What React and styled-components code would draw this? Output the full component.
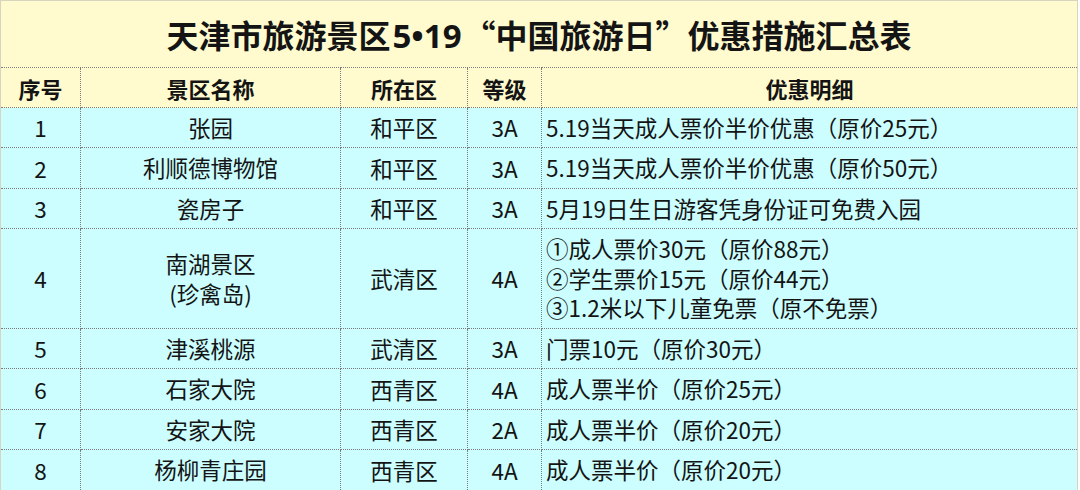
import styled, { createGlobalStyle } from "styled-components";

const GlobalStyle = createGlobalStyle`
  html, body {
    margin: 0;
    padding: 0;
    background: #ffffff;
  }
  body {
    font-family: "Noto Sans CJK SC", "Noto Sans", sans-serif;
    color: #141414;
  }
`;

const rows = [
  { no: "1", name: ["张园"], area: "和平区", level: "3A", detail: ["5.19当天成人票价半价优惠（原价25元）"], h: 40 },
  { no: "2", name: ["利顺德博物馆"], area: "和平区", level: "3A", detail: ["5.19当天成人票价半价优惠（原价50元）"], h: 41 },
  { no: "3", name: ["瓷房子"], area: "和平区", level: "3A", detail: ["5月19日生日游客凭身份证可免费入园"], h: 40 },
  {
    no: "4",
    name: ["南湖景区", "(珍禽岛)"],
    area: "武清区",
    level: "4A",
    detail: ["①成人票价30元（原价88元）", "②学生票价15元（原价44元）", "③1.2米以下儿童免票（原不免票）"],
    h: 100
  },
  { no: "5", name: ["津溪桃源"], area: "武清区", level: "3A", detail: ["门票10元（原价30元）"], h: 40 },
  { no: "6", name: ["石家大院"], area: "西青区", level: "4A", detail: ["成人票半价（原价25元）"], h: 41 },
  { no: "7", name: ["安家大院"], area: "西青区", level: "2A", detail: ["成人票半价（原价20元）"], h: 40 },
  { no: "8", name: ["杨柳青庄园"], area: "西青区", level: "4A", detail: ["成人票半价（原价20元）"], h: 41 }
];

const App = () => {
  return (
    <>
      <GlobalStyle />
      <Sheet>
        <colgroup>
          <col style={{ width: 80 }} />
          <col style={{ width: 260 }} />
          <col style={{ width: 127 }} />
          <col style={{ width: 74 }} />
          <col />
        </colgroup>
        <tbody>
          <tr>
            <TitleCell colSpan={5}>
              天津市旅游景区<Latin>5•19</Latin>“中国旅游日”优惠措施汇总表
            </TitleCell>
          </tr>
          <HeadRow>
            <HeadCell>序号</HeadCell>
            <HeadCell>景区名称</HeadCell>
            <HeadCell>所在区</HeadCell>
            <HeadCell>等级</HeadCell>
            <HeadCell>优惠明细</HeadCell>
          </HeadRow>
          {rows.map((r) => (
            <DataRow key={r.no} style={{ height: r.h }}>
              <Cell>{r.no}</Cell>
              <Cell>
                {r.name.map((n) => (
                  <Line key={n}>{n}</Line>
                ))}
              </Cell>
              <Cell>{r.area}</Cell>
              <Cell>{r.level}</Cell>
              <Cell $left>
                {r.detail.map((d) => (
                  <Line key={d}>{d}</Line>
                ))}
              </Cell>
            </DataRow>
          ))}
        </tbody>
      </Sheet>
    </>
  );
};

export default App;

const Sheet = styled.table`
  width: 1078px;
  border-collapse: collapse;
  table-layout: fixed;
  border: 1px solid #d6d6c0;
`;

const TitleCell = styled.td`
  height: 66px;
  padding: 0;
  background: #fffbcf;
  text-align: center;
  vertical-align: middle;
  font-size: 32px;
  font-weight: 700;
  border-bottom: 1px dotted #7c7c7c;
`;

const Latin = styled.span`
  font-family: "Noto Sans", "DejaVu Sans", sans-serif;
  font-size: 33px;
  margin: 0 2px;
`;

const HeadRow = styled.tr`
  height: 40px;
  background: #fffbcf;
`;

const HeadCell = styled.td`
  padding: 0;
  text-align: center;
  vertical-align: middle;
  font-size: 22px;
  font-weight: 700;
  border: 1px dotted #7c7c7c;
`;

const DataRow = styled.tr`
  background: #ccfeff;
`;

const Cell = styled.td`
  padding: 0 ${(p) => (p.$left ? "4px" : "0")};
  text-align: ${(p) => (p.$left ? "left" : "center")};
  vertical-align: middle;
  font-size: 22.5px;
  font-weight: 400;
  line-height: 29px;
  white-space: nowrap;
  border: 1px dotted #7c7c7c;
`;

const Line = styled.div`
  line-height: 29.5px;
`;
